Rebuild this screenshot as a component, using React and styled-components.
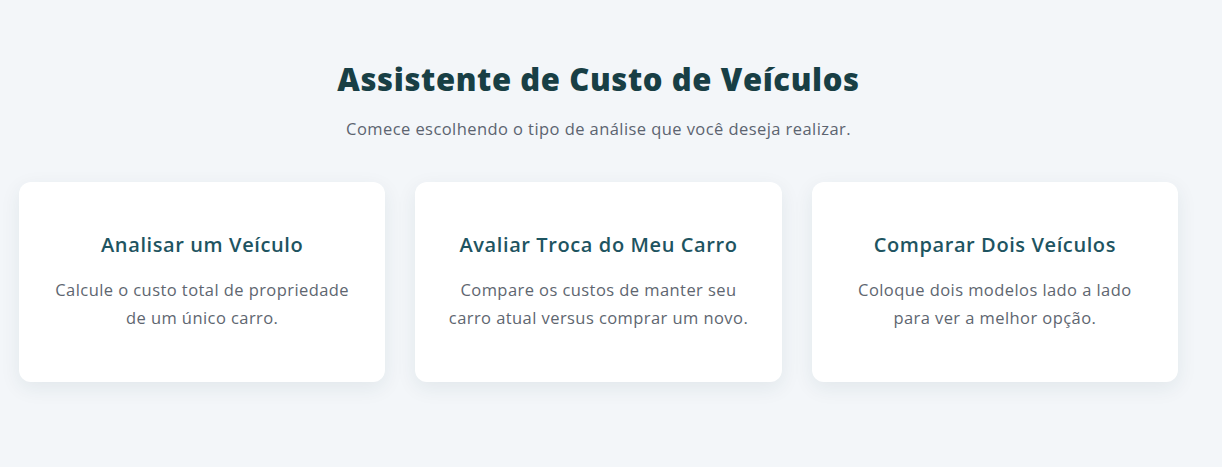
import React from 'react'
import styled, { createGlobalStyle } from "styled-components"

const GlobalStyle = createGlobalStyle`
  html, body {
    margin: 0;
    padding: 0;
    background: #f3f6f9;
    font-family: "Open Sans", "Noto Sans", sans-serif;
  }
`

const Page = styled.main`
  min-height: 467px;
  box-sizing: border-box;
  padding: 60px 44px 0 19px;
`

const Header = styled.header`
  text-align: center;
`

const Title = styled.h1`
  margin: 0;
  font-size: 31px;
  line-height: 38px;
  font-weight: 800;
  color: #183f45;
  letter-spacing: 0.6px;
`

const Subtitle = styled.p`
  margin: 19px 0 0;
  font-size: 16.5px;
  line-height: 24px;
  letter-spacing: 0.43px;
  color: #5c6470;
`

const Grid = styled.section`
  display: grid;
  grid-template-columns: repeat(3, 1fr);
  gap: 30px;
  margin-top: 41px;
`

const Card = styled.article`
  height: 200px;
  box-sizing: border-box;
  padding: 0 32px;
  background: #ffffff;
  border-radius: 12px;
  box-shadow: 0 6px 20px rgba(30, 60, 80, 0.08);
  display: flex;
  flex-direction: column;
  align-items: center;
  justify-content: center;
  text-align: center;
  cursor: pointer;
`

const CardTitle = styled.h2`
  margin: 0;
  font-size: 20px;
  line-height: 24px;
  font-weight: 600;
  letter-spacing: 0.6px;
  color: #1e5461;
`

const CardText = styled.p`
  margin: 19px 0 0;
  font-size: 16.5px;
  line-height: 28px;
  letter-spacing: 0.43px;
  color: #5e6670;
`

const options = [
  { title: "Analisar um Veículo", desc: "Calcule o custo total de propriedade de um único carro." },
  { title: "Avaliar Troca do Meu Carro", desc: "Compare os custos de manter seu carro atual versus comprar um novo." },
  { title: "Comparar Dois Veículos", desc: "Coloque dois modelos lado a lado para ver a melhor opção." },
]

const App = () => {
  return (
    <Page>
      <GlobalStyle />
      <Header>
        <Title>Assistente de Custo de Veículos</Title>
        <Subtitle>Comece escolhendo o tipo de análise que você deseja realizar.</Subtitle>
      </Header>
      <Grid>
        {options.map((o) => (
          <Card key={o.title}>
            <CardTitle>{o.title}</CardTitle>
            <CardText>{o.desc}</CardText>
          </Card>
        ))}
      </Grid>
    </Page>
  )
}

export default App
